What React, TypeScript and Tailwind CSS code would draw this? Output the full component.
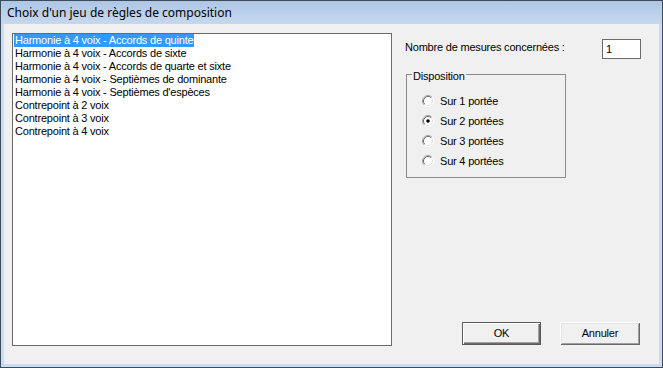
import React from "react";

const items = [
  "Harmonie à 4 voix - Accords de quinte",
  "Harmonie à 4 voix - Accords de sixte",
  "Harmonie à 4 voix - Accords de quarte et sixte",
  "Harmonie à 4 voix - Septièmes de dominante",
  "Harmonie à 4 voix - Septièmes d'espèces",
  "Contrepoint à 2 voix",
  "Contrepoint à 3 voix",
  "Contrepoint à 4 voix",
];

const radios = ["Sur 1 portée", "Sur 2 portées", "Sur 3 portées", "Sur 4 portées"];

function Radio({ checked }: { checked: boolean }) {
  return (
    <svg width="12" height="12" viewBox="0 0 12 12" className="shrink-0">
      <circle cx="6" cy="6" r="5" fill="#ffffff" />
      <path d="M2.11 9.89 A5.5 5.5 0 0 1 9.89 2.11" fill="none" stroke="#a0a0a0" strokeWidth="1" />
      <path d="M9.89 2.11 A5.5 5.5 0 0 1 2.11 9.89" fill="none" stroke="#ffffff" strokeWidth="1" />
      <path d="M2.82 9.18 A4.5 4.5 0 0 1 9.18 2.82" fill="none" stroke="#696969" strokeWidth="1" />
      <path d="M9.18 2.82 A4.5 4.5 0 0 1 2.82 9.18" fill="none" stroke="#e3e3e3" strokeWidth="1" />
      {checked && <circle cx="6" cy="6" r="1.8" fill="#000000" />}
    </svg>
  );
}

export default function App() {
  return (
    <div
      className="w-[663px] h-[368px] flex flex-col border border-[#3d4a5a] bg-[#cbdcf1] text-black"
      style={{ fontFamily: '"Liberation Sans", Arial, sans-serif' }}
    >
      <div
        className="h-[23px] shrink-0 flex items-center pl-[6px] text-[12px] bg-gradient-to-b from-[#aec7e6] to-[#c6d8ef]"
        style={{ fontFamily: '"Noto Sans", "Open Sans", sans-serif' }}
      >
        Choix d'un jeu de règles de composition
      </div>
      <div className="flex-1 mx-[3px] mb-[3px] bg-[#f0f0f0] flex pl-[8px] pt-[9px] pb-[18px] text-[11px] tracking-[-0.2px]">
        <div className="w-[380px] shrink-0 border border-[#6b6b6b] bg-white flex flex-col">
          {items.map((t, i) => (
            <div key={t} className="h-[13px] leading-[13px] flex">
              <span
                className={
                  i === 0
                    ? "ml-[1px] px-[1px] bg-[#3399ff] text-white whitespace-nowrap"
                    : "ml-[1px] px-[1px] whitespace-nowrap"
                }
              >
                {t}
              </span>
            </div>
          ))}
        </div>
        <div className="ml-[13px] w-[236px] flex flex-col">
          <div className="flex items-start mt-[6px] h-[20px]">
            <span className="leading-[13px] mt-[2px]">Nombre de mesures concernées :</span>
            <div className="ml-auto w-[39px] h-[20px] border border-[#6b6b6b] bg-white pl-[3px] leading-[18px]">
              1
            </div>
          </div>
          <div className="relative ml-[1px] mt-[15px] w-[160px] h-[104px] border border-[#8c8c8c] pt-[16px] pl-[15px]">
            <span className="absolute left-[5px] top-[-5px] px-[1px] bg-[#f0f0f0] leading-[13px]">
              Disposition
            </span>
            {radios.map((r, i) => (
              <div key={r} className="h-[20px] flex items-center gap-[6px]">
                <Radio checked={i === 1} />
                <span className="leading-[13px]">{r}</span>
              </div>
            ))}
          </div>
          <div className="mt-auto mb-[1px] flex pl-[57px] gap-[19px]">
            <button className="w-[79px] h-[23px] bg-[#f0f0f0] border border-[#5a5a5a] shadow-[inset_1px_1px_0_#ffffff,inset_-1px_-1px_0_#696969,inset_-2px_-2px_0_#a0a0a0] text-[11px]">
              OK
            </button>
            <button className="w-[80px] h-[23px] bg-[#f0f0f0] shadow-[inset_1px_1px_0_#ffffff,inset_-1px_-1px_0_#696969,inset_2px_2px_0_#e3e3e3,inset_-2px_-2px_0_#a0a0a0] text-[11px]">
              Annuler
            </button>
          </div>
        </div>
      </div>
    </div>
  );
}
